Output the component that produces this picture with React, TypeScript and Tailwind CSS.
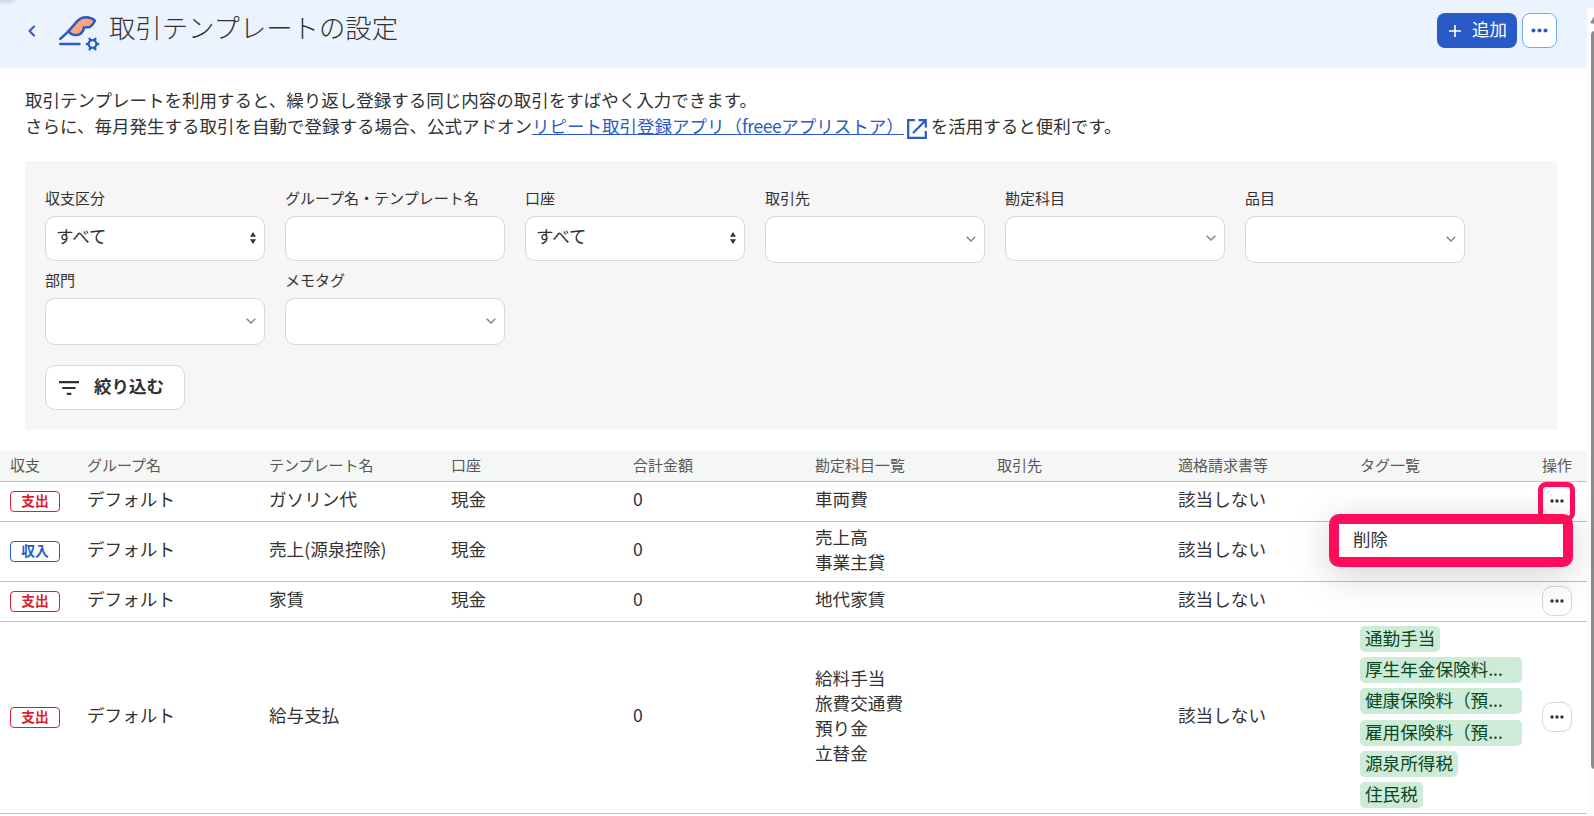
import type { ReactNode } from 'react';
import clsx from 'clsx';

type FieldKind = 'native' | 'text' | 'combo';

interface Field {
  label: string;
  kind: FieldKind;
  tall?: boolean;
}

interface TemplateRow {
  type: '支出' | '収入';
  group: string;
  name: string;
  wallet: string;
  amount: number;
  accounts: string[];
  partner: string;
  invoice: string;
  tags: string[];
  height: string;
  menuOpen?: boolean;
  hideAction?: boolean;
}

const fields: Field[] = [
  { label: '収支区分', kind: 'native' },
  { label: 'グループ名・テンプレート名', kind: 'text' },
  { label: '口座', kind: 'native' },
  { label: '取引先', kind: 'combo', tall: true },
  { label: '勘定科目', kind: 'combo' },
  { label: '品目', kind: 'combo', tall: true },
  { label: '部門', kind: 'combo', tall: true },
  { label: 'メモタグ', kind: 'combo', tall: true },
];

const columns = [
  '収支',
  'グループ名',
  'テンプレート名',
  '口座',
  '合計金額',
  '勘定科目一覧',
  '取引先',
  '適格請求書等',
  'タグ一覧',
  '操作',
];

const rows: TemplateRow[] = [
  {
    type: '支出',
    group: 'デフォルト',
    name: 'ガソリン代',
    wallet: '現金',
    amount: 0,
    accounts: ['車両費'],
    partner: '',
    invoice: '該当しない',
    tags: [],
    height: 'h-10',
    menuOpen: true,
  },
  {
    type: '収入',
    group: 'デフォルト',
    name: '売上(源泉控除)',
    wallet: '現金',
    amount: 0,
    accounts: ['売上高', '事業主貸'],
    partner: '',
    invoice: '該当しない',
    tags: [],
    height: 'h-15',
    hideAction: true,
  },
  {
    type: '支出',
    group: 'デフォルト',
    name: '家賃',
    wallet: '現金',
    amount: 0,
    accounts: ['地代家賃'],
    partner: '',
    invoice: '該当しない',
    tags: [],
    height: 'h-10',
  },
  {
    type: '支出',
    group: 'デフォルト',
    name: '給与支払',
    wallet: '',
    amount: 0,
    accounts: ['給料手当', '旅費交通費', '預り金', '立替金'],
    partner: '',
    invoice: '該当しない',
    tags: [
      '通勤手当',
      '厚生年金保険料...',
      '健康保険料（預...',
      '雇用保険料（預...',
      '源泉所得税',
      '住民税',
    ],
    height: 'h-48',
  },
];

const gridCols =
  'grid grid-cols-[77px_182px_182px_182px_182px_182px_181px_182px_182px_1fr] pl-2.5';

function Dots({ size = 15 }: { size?: number }) {
  return (
    <svg width={size} height={size} viewBox="0 0 15 15" fill="currentColor">
      <circle cx="2.2" cy="7.5" r="1.8" />
      <circle cx="7.5" cy="7.5" r="1.8" />
      <circle cx="12.8" cy="7.5" r="1.8" />
    </svg>
  );
}

function TemplateIcon() {
  return (
    <svg
      width="42"
      height="36"
      viewBox="0 0 42 36"
      fill="none"
      stroke="#285ac8"
      strokeWidth="2.5"
      strokeLinecap="round"
      strokeLinejoin="round"
    >
      <path
        d="M10.3 16.4L19.8 5.6C24 1.2 31.5 0.8 37 5.6C35.8 8.4 34.2 10.6 32 12L25.8 12.6C25.8 15 24.8 17 22.8 18.6C18.5 21.2 13.5 20.2 10.3 16.4Z"
        fill="#ffa578"
      />
      <path d="M2.3 23.8L11 15.8" />
      <path d="M2.3 29H21.5" />
      <circle cx="34.5" cy="29" r="3.9" strokeWidth="2.3" />
      <path
        strokeWidth="2.5"
        d="M32.3 24.8l-.6-1M36.7 24.8l.6-1M32.3 33.2l-.6 1M36.7 33.2l.6 1M29.8 29h-.9M39.2 29h.9"
      />
    </svg>
  );
}

function Header() {
  return (
    <header className="flex h-17 items-center justify-between bg-[#ebf3ff] pr-[30px] pb-[7px] pl-[25px]">
      <div className="flex items-center">
        <svg width="14" height="14" viewBox="0 0 14 14" fill="none" className="text-[#285ac8]">
          <path d="M9 2.5L4.5 7L9 11.5" stroke="currentColor" strokeWidth="2" strokeLinecap="round" strokeLinejoin="round" />
        </svg>
        <div className="mt-1 ml-[19px]">
          <TemplateIcon />
        </div>
        <h1 className="-mt-[6px] ml-[9px] text-[26.35px] leading-none font-light">取引テンプレートの設定</h1>
      </div>
      <div className="flex gap-[5px]">
        <button className="flex h-[35px] w-20 items-center rounded-lg bg-[#285ac8] pl-3 text-white">
          <svg width="12" height="12" viewBox="0 0 12 12" stroke="currentColor" strokeWidth="1.6" className="mt-px">
            <path d="M6 0v12M0 6h12" />
          </svg>
          <span className="-mt-[3px] ml-[11px]">追加</span>
        </button>
        <button className="flex h-[35px] w-[35px] items-center justify-center rounded-lg border border-[#73a5ff] bg-white text-[#285ac8]">
          <Dots size={17} />
        </button>
      </div>
    </header>
  );
}

function Description() {
  return (
    <div className="mt-[19px] ml-[25px] leading-[26px]">
      <p>取引テンプレートを利用すると、繰り返し登録する同じ内容の取引をすばやく入力できます。</p>
      <p className="flex">
        <span>さらに、毎月発生する取引を自動で登録する場合、公式アドオン</span>
        <a href="#" className="text-[#285ac8] underline">
          リピート取引登録アプリ（<span className="tracking-[-0.4px]">freee</span>アプリストア）
        </a>
        <svg
          width="20"
          height="20"
          viewBox="0 0 20 20"
          fill="none"
          stroke="#285ac8"
          strokeWidth="2.2"
          className="mt-[6px] mr-1 ml-[3px]"
        >
          <path d="M8 1.2H1.2V18.8H18.8V12" />
          <path d="M11.5 1.2H18.8V8.5M18.5 1.5L6 14" />
        </svg>
        <span>を活用すると便利です。</span>
      </p>
    </div>
  );
}

function FilterField({ label, kind, tall }: Field) {
  return (
    <div className="h-[82px] w-[220px]">
      <div className="h-[27px] text-[15px] leading-[18px]">{label}</div>
      <div
        className={clsx(
          'flex items-center justify-between rounded-[10px] border border-[#d9d7d7] bg-white',
          tall ? 'h-[47px]' : 'h-[45px]'
        )}
      >
        {kind === 'native' && (
          <>
            <span className="-mt-[4px] pl-[10px]">すべて</span>
            <svg width="6" height="12" viewBox="0 0 6 12" fill="#323232" className="mr-2 -mt-px">
              <path d="M0 4.8L3 0l3 4.8zM0 7.2L3 12l3-4.8z" />
            </svg>
          </>
        )}
        {kind === 'combo' && (
          <svg
            width="10"
            height="6"
            viewBox="0 0 10 6"
            fill="none"
            stroke="#8c8989"
            strokeWidth="1.6"
            className="-mt-0.5 mr-2 ml-auto"
          >
            <path d="M0.7 0.7L5 5l4.3-4.3" />
          </svg>
        )}
      </div>
    </div>
  );
}

function FilterPanel() {
  return (
    <section className="mt-[22px] mr-[30px] ml-[25px] h-[269px] bg-[#f7f5f6] px-5 pt-[28px]">
      <div className="flex flex-wrap gap-x-5">
        {fields.map((field) => (
          <FilterField key={field.label} {...field} />
        ))}
      </div>
      <button className="mt-3 flex h-[45px] w-[140px] items-center rounded-[10px] border border-[#d9d7d7] bg-white pl-[13px] font-bold">
        <svg width="20" height="14" viewBox="0 0 20 14" stroke="#323232" strokeWidth="2.2">
          <path d="M0 1.2h20M3.2 7h13.4M7.8 12.8h4.6" />
        </svg>
        <span className="-mt-0.5 ml-[15px]">絞り込む</span>
      </button>
    </section>
  );
}

function TypeBadge({ type }: { type: TemplateRow['type'] }) {
  return (
    <span
      className={clsx(
        'flex h-[21px] w-[50px] items-center justify-center rounded border bg-white pb-px text-[13.75px] leading-none font-bold',
        type === '支出' ? 'border-[#dc1e32] text-[#dc1e32]' : 'border-[#285ac8] text-[#285ac8]'
      )}
    >
      {type}
    </span>
  );
}

function Text({ children }: { children: ReactNode }) {
  return <span className="-mt-1.5 text-[17.6px] leading-[25px]">{children}</span>;
}

function ActionMenu() {
  return (
    <>
      {/* highlight around the trigger */}
      <div className="absolute -top-[4px] -left-[4px] h-[39px] w-[37px] rounded-lg border-5 border-[#ff0d5b]" />
      <div className="absolute top-[28px] -right-px z-10 h-[53px] w-[244px] rounded-[10px] border-10 border-[#ff0d5b] bg-white pl-[14px] leading-[29px] shadow-[0_8px_40px_rgba(0,0,0,0.18)]">
        削除
      </div>
    </>
  );
}

function TemplateTable() {
  return (
    <section className="mt-[21px]">
      <div
        className={clsx(
          gridCols,
          'h-[31px] border-b border-[#b7c4c1] bg-[#f5f7f6] text-[15px] leading-7 text-[#595757]'
        )}
      >
        {columns.map((column) => (
          <div key={column}>{column}</div>
        ))}
      </div>
      {rows.map((row) => (
        <div key={row.name} className={clsx(gridCols, row.height, 'items-center border-b border-[#b7c4c1]')}>
          <TypeBadge type={row.type} />
          <Text>{row.group}</Text>
          <Text>{row.name}</Text>
          <Text>{row.wallet}</Text>
          <Text>{row.amount}</Text>
          <div className="-mt-1.5 text-[17.6px] leading-[25px]">
            {row.accounts.map((account) => (
              <div key={account}>{account}</div>
            ))}
          </div>
          <Text>{row.partner}</Text>
          <Text>{row.invoice}</Text>
          <div className="-mt-px flex flex-col items-start gap-[5.4px]">
            {row.tags.map((tag) => (
              <span
                key={tag}
                className={clsx(
                  'h-[26px] rounded-[5px] bg-[#cdebd7] px-[5px] text-[17.6px] leading-[23px] text-[#0a4623]',
                  tag.endsWith('...') && 'w-[162px]'
                )}
              >
                {tag}
              </span>
            ))}
          </div>
          <div className="relative -mt-px w-[30px]">
            {!row.hideAction && (
              <button className="flex h-[30px] w-[30px] items-center justify-center rounded-[10px] border border-[#d9d7d7] bg-white">
                <Dots size={14} />
              </button>
            )}
            {row.menuOpen && <ActionMenu />}
          </div>
        </div>
      ))}
    </section>
  );
}

function Scrollbar() {
  return (
    <div className="h-full w-[7px] overflow-hidden bg-[#ebf3ff] pt-2">
      <div className="h-full bg-[#fcfcfc] pt-2">
        <svg width="8" height="8" viewBox="0 0 8 8" fill="#8b8b8b" className="ml-[3px]">
          <path d="M0 7L4 0.5L8 7Q4 8.5 0 7Z" />
        </svg>
        <div className="mt-[7px] ml-1 h-[738px] w-[7px] rounded-l-[4px] bg-[#8b8b8b]" />
      </div>
    </div>
  );
}

export default function App() {
  return (
    <div className="relative flex h-[816px] w-[1594px] overflow-hidden bg-white font-['Noto_Sans_CJK_JP',sans-serif] text-[17.5px] text-[#323232]">
      {/* shadow cast by the panel above the page */}
      <div className="absolute -top-2 left-0 h-2 w-3 shadow-[0_0_5px_2px_rgba(0,0,0,0.16)]" />
      <main className="w-[1587px]">
        <Header />
        <Description />
        <FilterPanel />
        <TemplateTable />
      </main>
      <Scrollbar />
    </div>
  );
}
